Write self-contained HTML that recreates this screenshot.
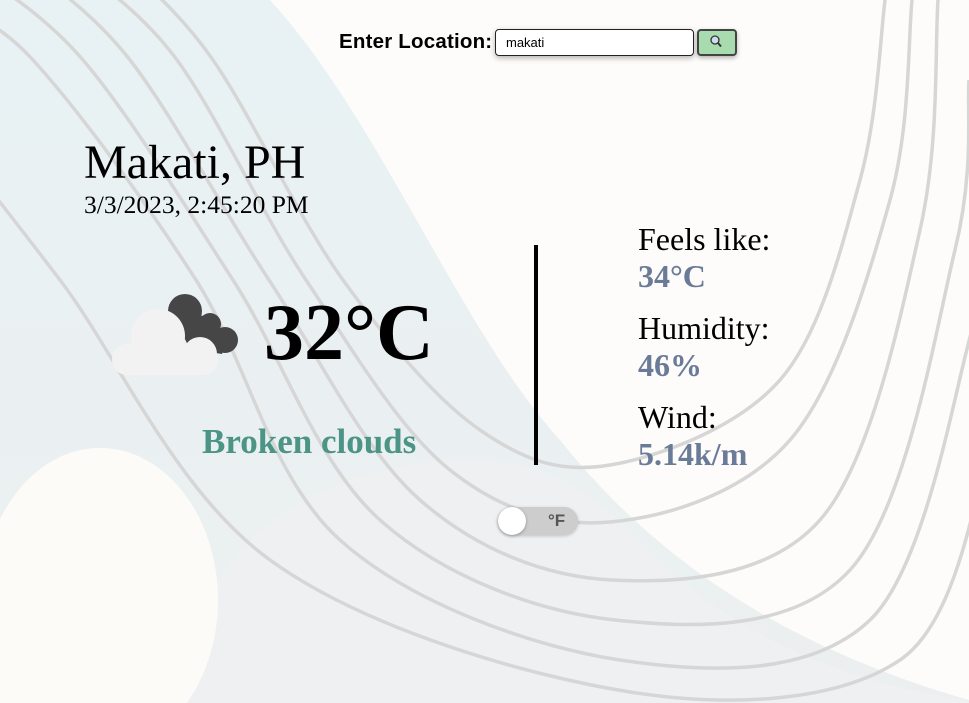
<!DOCTYPE html>
<html><head><style>
html,body{margin:0;padding:0;width:969px;height:703px;overflow:hidden;background:#fdfcfa;font-family:"Liberation Serif",serif;}
svg.bg{position:absolute;left:0;top:0;overflow:hidden}
.abs{position:absolute}
</style></head><body>
<svg class="bg" width="969" height="703" viewBox="0 0 969 703">
<defs><linearGradient id="g" x1="0" y1="0" x2="0" y2="1"><stop offset="0" stop-color="#e8f2f4"/><stop offset="1" stop-color="#eceff0"/></linearGradient></defs>
<path d="M0,0 L270,0 C380,120 460,330 560,440 C640,540 760,640 969,700 L969,703 L0,703 Z" fill="url(#g)"/>
<path d="M180,703 C200,520 330,470 450,460 C560,455 600,500 660,560 C720,620 820,680 969,700 L969,703 Z" fill="#eef0f1"/>
<g id="lines" fill="none" stroke="#d6d6d6" stroke-width="3.5"></g>
<ellipse cx="100" cy="600" rx="118" ry="152" fill="#fcfbf8"/>
<rect x="0" y="560" width="40" height="143" fill="#fcfbf8"/>
</svg>
<script>
var L=[
[[-80,100],[60,280],[270,560],[630,692],[900,660],[990,450]],
[[-60,0],[33,60],[196,280],[340,540],[620,660],[870,620],[975,320]],
[[-40,-40],[83,60],[233,280],[380,520],[615,620],[850,570],[955,250],[969,80]],
[[20,-40],[130,60],[269,280],[420,500],[612,580],[820,520],[920,230],[938,0],[940,-60]],
[[70,-40],[177,60],[306,280],[450,470],[610,522],[790,440],[890,200],[912,0],[915,-60]],
[[120,-40],[213,60],[343,280],[480,430],[610,465],[780,380],[860,180],[885,0],[890,-60]]
];
var g=document.getElementById('lines');
L.forEach(function(p){
 var d='M'+p[0][0]+','+p[0][1];
 for(var i=0;i<p.length-1;i++){
  var a=p[i-1]||p[i],b=p[i],c=p[i+1],e=p[i+2]||c;
  var c1=[b[0]+(c[0]-a[0])/6,b[1]+(c[1]-a[1])/6],c2=[c[0]-(e[0]-b[0])/6,c[1]-(e[1]-b[1])/6];
  d+=' C'+c1+' '+c2+' '+c;
 }
 var el=document.createElementNS('http://www.w3.org/2000/svg','path');
 el.setAttribute('d',d);g.appendChild(el);
});
</script>

<div class="abs" style="left:339px;top:30px;font:bold 20.5px 'Liberation Sans',sans-serif;color:#000;letter-spacing:0.2px">Enter Location:</div>
<div class="abs" style="left:495px;top:29px;border:1px solid #222;border-radius:4px;background:#fff;box-shadow:0 2px 6px rgba(0,0,0,.3);font:13px 'Liberation Sans',sans-serif;line-height:25px;box-sizing:border-box;width:199px;height:27px;padding-left:10px">makati</div>
<div class="abs" style="left:697px;top:29px;width:40px;height:27px;box-sizing:border-box;border:2px solid #444;border-radius:4px;background:#a8dcae;box-shadow:0 2px 5px rgba(0,0,0,.3)">
<svg width="36" height="23" viewBox="0 0 36 23"><circle cx="16" cy="9" r="4" fill="#cde" stroke="#333" stroke-width="1.3"/><path d="M19,12 L22,15.5" stroke="#333" stroke-width="2"/></svg></div>

<div class="abs" style="left:84px;top:135px;font-size:48px;color:#000">Makati, PH</div>
<div class="abs" style="left:84px;top:190px;font-size:25.5px;color:#000">3/3/2023, 2:45:20 PM</div>

<svg class="abs" style="left:110px;top:294px" width="130" height="82" viewBox="0 0 130 82">
<g fill="#464646"><circle cx="75" cy="17" r="17"/><circle cx="100" cy="30" r="11"/><circle cx="115" cy="46" r="13"/><path d="M62,20 L95,22 L118,40 L112,60 L80,55 Z"/></g>
<g fill="#f2f2f2"><circle cx="48" cy="42" r="27"/><circle cx="90" cy="60" r="17"/><circle cx="92" cy="58" r="12"/><rect x="2" y="50" width="106" height="31" rx="15"/></g>
</svg>
<div class="abs" style="left:264px;top:288px;font-size:80px;font-weight:bold;color:#000">32°C</div>
<div class="abs" style="left:202px;top:422px;font-size:35px;font-weight:bold;color:#4b9486">Broken clouds</div>

<div class="abs" style="left:534px;top:245px;width:4px;height:220px;background:#000"></div>

<div class="abs" style="left:638px;top:221px;font-size:32px;line-height:37px;color:#000">Feels like:<br><b style="color:#6a7b98">34°C</b></div>
<div class="abs" style="left:638px;top:310px;font-size:32px;line-height:37px;color:#000">Humidity:<br><b style="color:#6a7b98">46%</b></div>
<div class="abs" style="left:638px;top:399px;font-size:32px;line-height:37px;color:#000">Wind:<br><b style="color:#6a7b98">5.14k/m</b></div>

<div class="abs" style="left:498px;top:507px;width:80px;height:28px;border-radius:14px;background:#cdcdcd;box-shadow:0 1px 3px rgba(0,0,0,.2)"></div>
<div class="abs" style="left:498px;top:507px;width:28px;height:28px;border-radius:50%;background:#fff;box-shadow:0 1px 3px rgba(0,0,0,.3)"></div>
<div class="abs" style="left:548px;top:511px;font:bold 17px 'Liberation Sans',sans-serif;color:#555">°F</div>
</body></html>
